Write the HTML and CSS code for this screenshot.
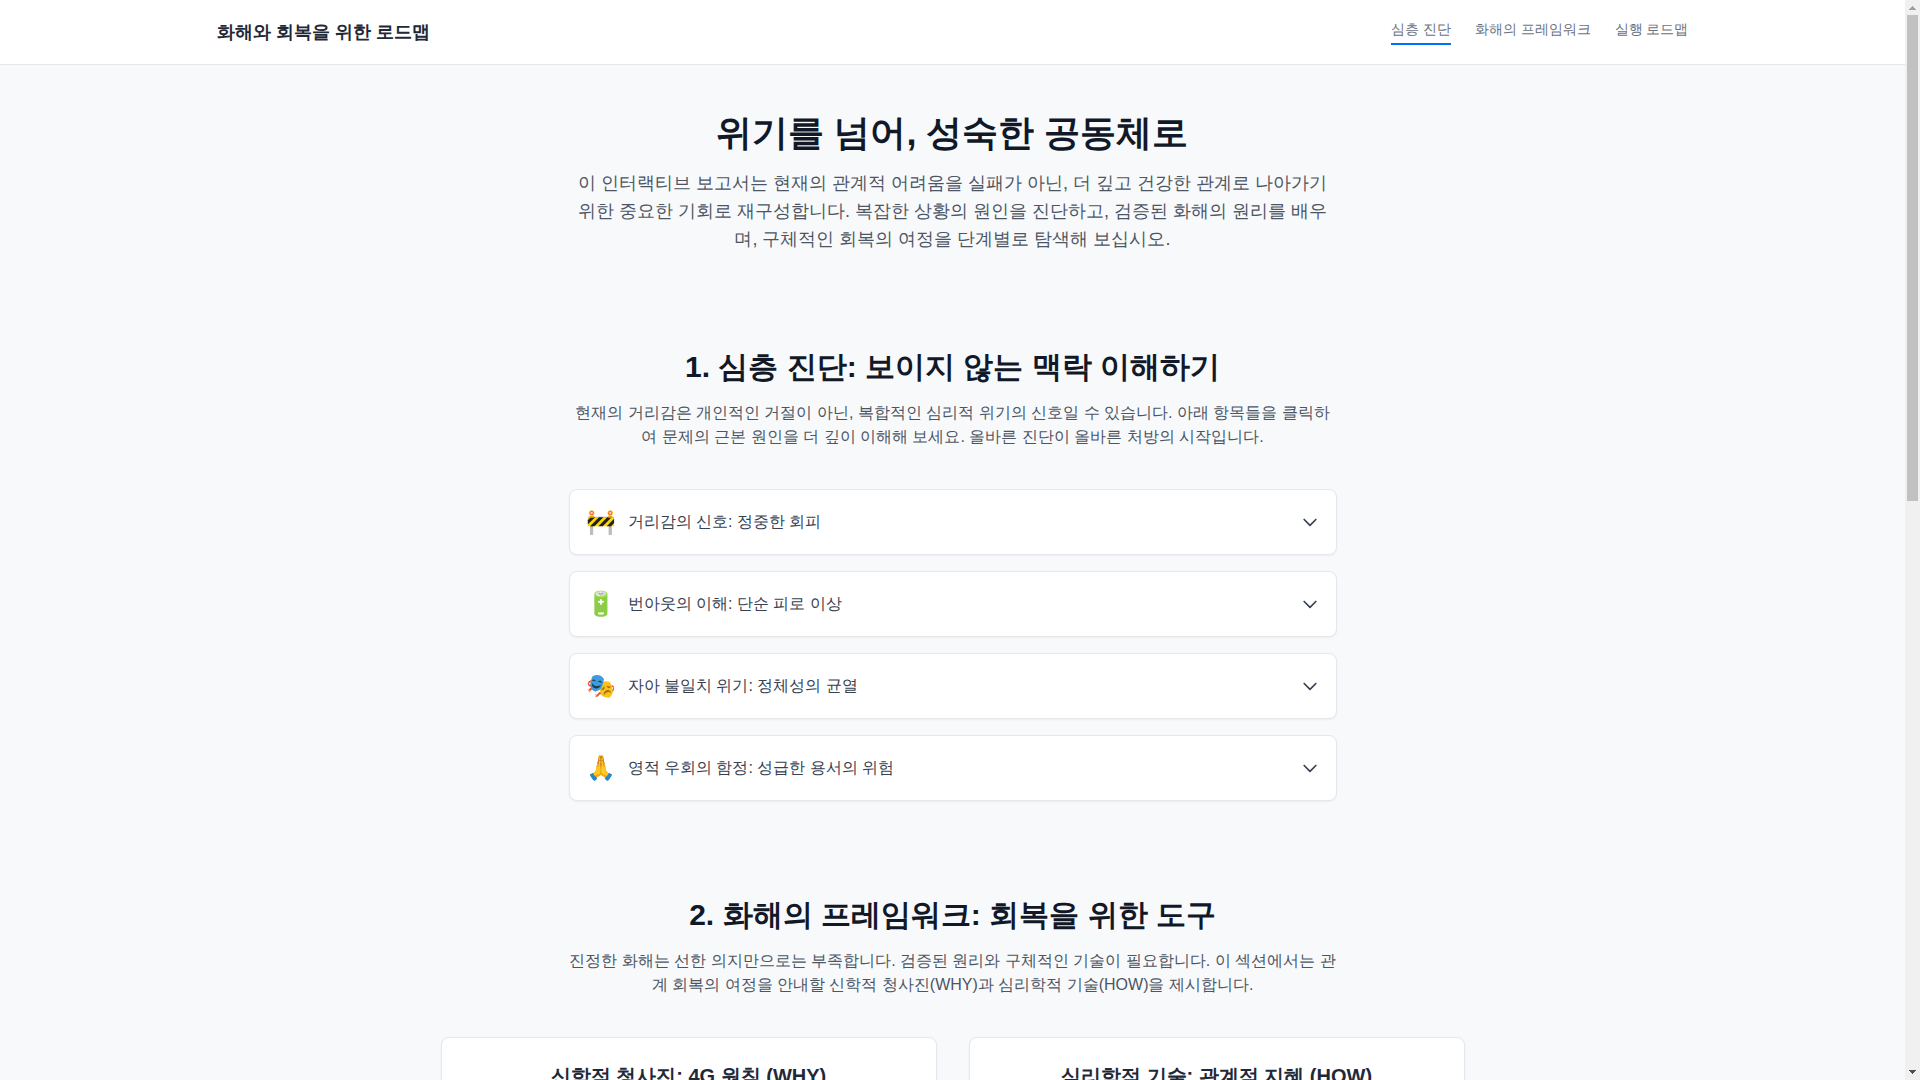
FILE: index.html
```html
<!DOCTYPE html>
<html lang="ko">
<head>
  <meta charset="UTF-8">
  <meta name="viewport" content="width=device-width, initial-scale=1.0">
  <title>화해와 회복을 위한 로드맵</title>
  <link rel="stylesheet" href="styles.css">
</head>
<body>
  <header class="site-header">
    <div class="header-inner">
      <div class="brand">화해와 회복을 위한 로드맵</div>
      <nav class="nav">
        <a href="#diagnosis" class="nav-link active">심층 진단</a>
        <a href="#framework" class="nav-link">화해의 프레임워크</a>
        <a href="#roadmap" class="nav-link">실행 로드맵</a>
      </nav>
    </div>
  </header>

  <main class="main">
    <section class="hero">
      <h1>위기를 넘어, 성숙한 공동체로</h1>
      <p>이 인터랙티브 보고서는 현재의 관계적 어려움을 실패가 아닌, 더 깊고 건강한 관계로 나아가기 위한 중요한 기회로 재구성합니다. 복잡한 상황의 원인을 진단하고, 검증된 화해의 원리를 배우며, 구체적인 회복의 여정을 단계별로 탐색해 보십시오.</p>
    </section>

    <section id="diagnosis" class="section">
      <div class="section-head">
        <h2>1. 심층 진단: 보이지 않는 맥락 이해하기</h2>
        <p>현재의 거리감은 개인적인 거절이 아닌, 복합적인 심리적 위기의 신호일 수 있습니다. 아래 항목들을 클릭하여 문제의 근본 원인을 더 깊이 이해해 보세요. 올바른 진단이 올바른 처방의 시작입니다.</p>
      </div>
      <div class="accordion">
        <button type="button" class="accordion-item">
          <span class="emoji">🚧</span>
          <span class="label">거리감의 신호: 정중한 회피</span>
          <svg class="chevron" viewBox="0 0 24 24"><path d="M19 9l-7 7-7-7"/></svg>
        </button>
        <button type="button" class="accordion-item">
          <span class="emoji">🔋</span>
          <span class="label">번아웃의 이해: 단순 피로 이상</span>
          <svg class="chevron" viewBox="0 0 24 24"><path d="M19 9l-7 7-7-7"/></svg>
        </button>
        <button type="button" class="accordion-item">
          <span class="emoji">🎭</span>
          <span class="label">자아 불일치 위기: 정체성의 균열</span>
          <svg class="chevron" viewBox="0 0 24 24"><path d="M19 9l-7 7-7-7"/></svg>
        </button>
        <button type="button" class="accordion-item">
          <span class="emoji">🙏</span>
          <span class="label">영적 우회의 함정: 성급한 용서의 위험</span>
          <svg class="chevron" viewBox="0 0 24 24"><path d="M19 9l-7 7-7-7"/></svg>
        </button>
      </div>
    </section>

    <section id="framework" class="section">
      <div class="section-head">
        <h2>2. 화해의 프레임워크: 회복을 위한 도구</h2>
        <p>진정한 화해는 선한 의지만으로는 부족합니다. 검증된 원리와 구체적인 기술이 필요합니다. 이 섹션에서는 관계 회복의 여정을 안내할 신학적 청사진(WHY)과 심리학적 기술(HOW)을 제시합니다.</p>
      </div>
      <div class="cards">
        <article class="card">
          <h3>신학적 청사진: 4G 원칙 (WHY)</h3>
        </article>
        <article class="card">
          <h3>심리학적 기술: 관계적 지혜 (HOW)</h3>
        </article>
      </div>
    </section>

    <section id="roadmap" class="section roadmap"></section>
  </main>

  <div class="scrollbar" aria-hidden="true">
    <svg class="scroll-arrow up" viewBox="0 0 7 4"><path d="M0 4V3h1V2h1V1h1V0h1v1h1v1h1v1h1v1z"/></svg>
    <div class="scroll-track"><div class="scroll-thumb"></div></div>
    <svg class="scroll-arrow down" viewBox="0 0 7 4"><path d="M0 0v1h1v1h1v1h1v1h1V3h1V2h1V1h1V0z"/></svg>
  </div>
</body>
</html>
```
FILE: styles.css
```css
* {
  box-sizing: border-box;
}
body {
  margin: 0;
  padding-right: 15px;
  font-family: "Liberation Sans", sans-serif;
  font-size: 16px;
  line-height: 24px;
  color: #374151;
  background-color: #f8f9fb;
}
h1, h2, h3, p {
  margin: 0;
}

/* header */
.site-header {
  position: sticky;
  top: 0;
  z-index: 10;
  background-color: #ffffff;
  border-bottom: 1px solid #e5e7eb;
}
.header-inner {
  display: flex;
  align-items: center;
  justify-content: space-between;
  max-width: 1536px;
  height: 64px;
  margin: 0 auto;
  padding: 0 32px;
}
.brand {
  font-size: 18px;
  line-height: 28px;
  font-weight: bold;
  color: #1f2937;
}
.nav {
  display: flex;
  gap: 24px;
}
.nav-link {
  padding-bottom: 4px;
  border-bottom: 2px solid transparent;
  font-size: 14px;
  line-height: 20px;
  color: #6b7280;
  text-decoration: none;
}
.nav-link.active {
  border-bottom-color: #0070ff;
}

/* content */
.main {
  max-width: 1088px;
  margin: 0 auto;
  padding: 48px 32px;
}
.hero {
  max-width: 768px;
  margin: 0 auto 96px;
  text-align: center;
}
.hero h1 {
  margin-bottom: 16px;
  font-size: 36px;
  line-height: 40px;
  color: #111827;
}
.hero p {
  font-size: 18px;
  line-height: 28px;
  color: #4b5563;
}
.section {
  margin-bottom: 96px;
}
.section-head {
  max-width: 768px;
  margin: 0 auto 40px;
  text-align: center;
}
.section-head h2 {
  margin-bottom: 16px;
  font-size: 30px;
  line-height: 36px;
  color: #111827;
}
.section-head p {
  color: #4b5563;
}

/* accordion */
.accordion {
  display: flex;
  flex-direction: column;
  gap: 16px;
  max-width: 768px;
  margin: 0 auto;
}
.accordion-item {
  display: flex;
  align-items: center;
  gap: 12px;
  padding: 16px;
  font: inherit;
  color: #374151;
  text-align: left;
  background-color: #ffffff;
  border: 1px solid #e5e7eb;
  border-radius: 8px;
  box-shadow: 0 1px 2px rgba(0, 0, 0, 0.05);
  cursor: pointer;
}
.emoji {
  font-size: 24px;
  line-height: 32px;
}
.label {
  flex: 1;
}
.chevron {
  width: 20px;
  height: 20px;
  fill: none;
  stroke: #374151;
  stroke-width: 2;
  stroke-linecap: round;
  stroke-linejoin: round;
}

/* framework cards */
.cards {
  display: grid;
  grid-template-columns: 1fr 1fr;
  gap: 32px;
}
.card {
  min-height: 480px;
  padding: 24px;
  background-color: #ffffff;
  border: 1px solid #e5e7eb;
  border-radius: 8px;
  box-shadow: 0 1px 2px rgba(0, 0, 0, 0.05);
}
.card h3 {
  font-size: 20px;
  line-height: 28px;
  text-align: center;
  color: #1f2937;
}
.roadmap {
  min-height: 592px;
}

/* scrollbar */
.scrollbar {
  position: fixed;
  top: 0;
  right: 0;
  bottom: 0;
  z-index: 20;
  display: flex;
  flex-direction: column;
  align-items: center;
  width: 15px;
  padding: 6px 0;
  background-color: #f0f0f0;
}
.scroll-arrow {
  width: 7px;
  height: 4px;
  fill: #a0a0a0;
}
.scroll-arrow.down {
  fill: #505050;
}
.scroll-track {
  flex: 1;
  width: 11px;
  margin: 5px 0;
}
.scroll-thumb {
  height: 486px;
  background-color: #c1c1c1;
}
```
